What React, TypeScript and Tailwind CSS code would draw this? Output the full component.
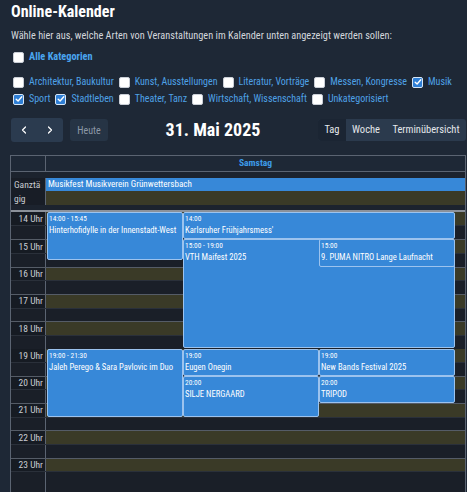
import { ChevronLeft, ChevronRight } from "lucide-react";

type Cat = { label: string; checked: boolean };

const row1: Cat[] = [
  { label: "Architektur, Baukultur", checked: false },
  { label: "Kunst, Ausstellungen", checked: false },
  { label: "Literatur, Vorträge", checked: false },
  { label: "Messen, Kongresse", checked: false },
  { label: "Musik", checked: true },
];
const row2: Cat[] = [
  { label: "Sport", checked: true },
  { label: "Stadtleben", checked: true },
  { label: "Theater, Tanz", checked: false },
  { label: "Wirtschaft, Wissenschaft", checked: false },
  { label: "Unkategorisiert", checked: false },
];

const H = 27.3;

type Ev = { time: string; title: string; start: number; dur: number; col: number; span: number };

const events: Ev[] = [
  { time: "14:00 - 15:45", title: "Hinterhofidylle in der Innenstadt-West", start: 0, dur: 1.75, col: 0, span: 1 },
  { time: "14:00", title: "Karlsruher Frühjahrsmess'", start: 0, dur: 1, col: 1, span: 2 },
  { time: "15:00 - 19:00", title: "VTH Maifest 2025", start: 1, dur: 4, col: 1, span: 2 },
  { time: "15:00", title: "9. PUMA NITRO Lange Laufnacht", start: 1, dur: 1, col: 2, span: 1 },
  { time: "19:00 - 21:30", title: "Jaleh Perego & Sara Pavlovic im Duo", start: 5, dur: 2.5, col: 0, span: 1 },
  { time: "19:00", title: "Eugen Onegin", start: 5, dur: 1, col: 1, span: 1 },
  { time: "19:00", title: "New Bands Festival 2025", start: 5, dur: 1, col: 2, span: 1 },
  { time: "20:00", title: "SILJE NERGAARD", start: 6, dur: 1.5, col: 1, span: 1 },
  { time: "20:00", title: "TRIPOD", start: 6, dur: 1, col: 2, span: 1 },
];

function Box({ checked }: { checked: boolean }) {
  return checked ? (
    <span className="w-[11px] h-[11px] shrink-0 rounded-[2px] bg-[#2f7fd6] border border-[#d6e6f7] flex items-center justify-center">
      <svg width="8" height="8" viewBox="0 0 8 8" fill="none">
        <path d="M1.2 4.2 L3.1 6 L6.8 1.8" stroke="white" strokeWidth="1.4" strokeLinecap="round" strokeLinejoin="round" />
      </svg>
    </span>
  ) : (
    <span className="w-[11px] h-[11px] shrink-0 rounded-[2px] bg-white border border-[#c9ced6]" />
  );
}

function CatRow({ items }: { items: Cat[] }) {
  return (
    <div className="flex items-center h-[14px] pl-[3px] gap-[5px]">
      {items.map((c) => (
        <div key={c.label} className="flex items-center gap-[5px]">
          <Box checked={c.checked} />
          <span className="text-[10px] leading-[14px] text-[#4ea2e6] whitespace-nowrap">{c.label}</span>
        </div>
      ))}
    </div>
  );
}

export default function App() {
  const hours = [14, 15, 16, 17, 18, 19, 20, 21, 22, 23];
  return (
    <div className="w-[467px] h-[492px] overflow-hidden bg-[#1e2836] pl-[10px] pr-[1px] font-['Roboto_Condensed',sans-serif] text-[#d3d7dc]">
      <h1 className="h-[22px] pt-[2px] pl-[1px] text-[16px] leading-[20px] font-bold text-white">Online-Kalender</h1>
      <p className="mt-[7px] pl-[1px] h-[14px] text-[10.3px] leading-[14px] text-[#d3d7dc] whitespace-nowrap">
        Wähle hier aus, welche Arten von Veranstaltungen im Kalender unten angezeigt werden sollen:
      </p>
      <div className="mt-[7px] flex items-center h-[14px] pl-[3px] gap-[5px]">
        <Box checked={false} />
        <span className="text-[10.3px] leading-[14px] font-bold text-[#4aa6f0]">Alle Kategorien</span>
      </div>
      <div className="mt-[11px]">
        <CatRow items={row1} />
      </div>
      <div className="mt-[3px]">
        <CatRow items={row2} />
      </div>

      {/* toolbar */}
      <div className="mt-[12px] h-[24px] flex items-center justify-between pl-[1px]">
        <div className="flex items-center gap-[7px]">
          <div className="flex h-[24px] rounded-[3px] bg-[#2b3b4f] overflow-hidden">
            <button className="w-[26px] flex items-center justify-center text-white">
              <ChevronLeft size={12} strokeWidth={2.5} />
            </button>
            <button className="w-[26px] flex items-center justify-center text-white">
              <ChevronRight size={12} strokeWidth={2.5} />
            </button>
          </div>
          <button className="h-[22px] w-[38px] rounded-[3px] bg-[#263445] text-[#8d99a8] text-[10px]">Heute</button>
        </div>
        <div className="text-[18px] font-bold text-white leading-[24px] whitespace-nowrap">31. Mai 2025</div>
        <div className="flex h-[22px] rounded-[3px] overflow-hidden bg-[#2b3a4d] text-[10.5px] text-[#e4e7eb]">
          <button className="w-[28px] bg-[#1b2533]">Tag</button>
          <button className="w-[40px]">Woche</button>
          <button className="w-[80px]">Terminübersicht</button>
        </div>
      </div>

      {/* calendar */}
      <div className="mt-[13px] border border-[#5b6472] w-[456px]">
        <div className="flex h-[16px] border-b border-[#5b6472]">
          <div className="w-[35px] border-r border-[#5b6472]" />
          <div className="flex-1 flex items-center justify-center text-[9.5px] font-bold text-[#3d9be9]">Samstag</div>
        </div>
        <div className="flex pt-[6px] pb-[5px] bg-[#1c232e]">
          <div className="w-[35px] border-r border-[#5b6472] h-[27px] bg-[#181d26] pl-[3px] text-[9.5px] leading-[14px] text-[#c9cdd3]">
            Ganztä<wbr />gig
          </div>
          <div className="flex-1 h-[27px] bg-[#3a3a27] relative">
            <div className="h-[13px] bg-[#3788d8] text-white text-[9.1px] leading-[13px] pl-[2px] whitespace-nowrap">
              Musikfest Musikverein Grünwettersbach
            </div>
          </div>
        </div>
        <div className="h-[2px] bg-[#8b919a]" />
        <div className="relative">
          {hours.map((h) => (
            <div key={h} className="flex flex-col h-[27.3px] border-t border-[#555c67] first:border-t-0">
              <div className="flex flex-1">
                <div className="w-[35px] border-r border-[#5b6472] bg-[#161b23] text-right pr-[2px] text-[9.5px] leading-[12px] text-[#c9cdd3] whitespace-nowrap flex items-center justify-end">
                  {h} Uhr
                </div>
                <div className="flex-1 bg-[#3a3a27]" />
              </div>
              <div className="flex flex-1 border-t border-[#2a303a]">
                <div className="w-[35px] border-r border-[#5b6472] bg-[#1a1f28]" />
                <div className="flex-1 bg-[#1a1f28]" />
              </div>
            </div>
          ))}
          <div className="absolute top-0 bottom-0 left-[35px] right-0">
            {events.map((e) => (
              <div
                key={e.title}
                className="absolute bg-[#3788d8] border border-[#9cc3ee] rounded-[2px] overflow-hidden text-white pl-[1px]"
                style={{
                  top: e.start * H,
                  height: e.dur * H,
                  left: 1 + e.col * 136,
                  width: e.span * 136,
                }}
              >
                <div className="text-[7.4px] leading-[9px] pt-[1px] whitespace-nowrap">{e.time}</div>
                <div className="text-[8.6px] leading-[12px] mt-[1px] whitespace-nowrap">{e.title}</div>
              </div>
            ))}
          </div>
          <div className="h-[20px] flex">
            <div className="w-[35px] border-r border-[#5b6472] bg-[#1a1f28]" />
            <div className="flex-1 bg-[#1a1f28]" />
          </div>
        </div>
      </div>
    </div>
  );
}
